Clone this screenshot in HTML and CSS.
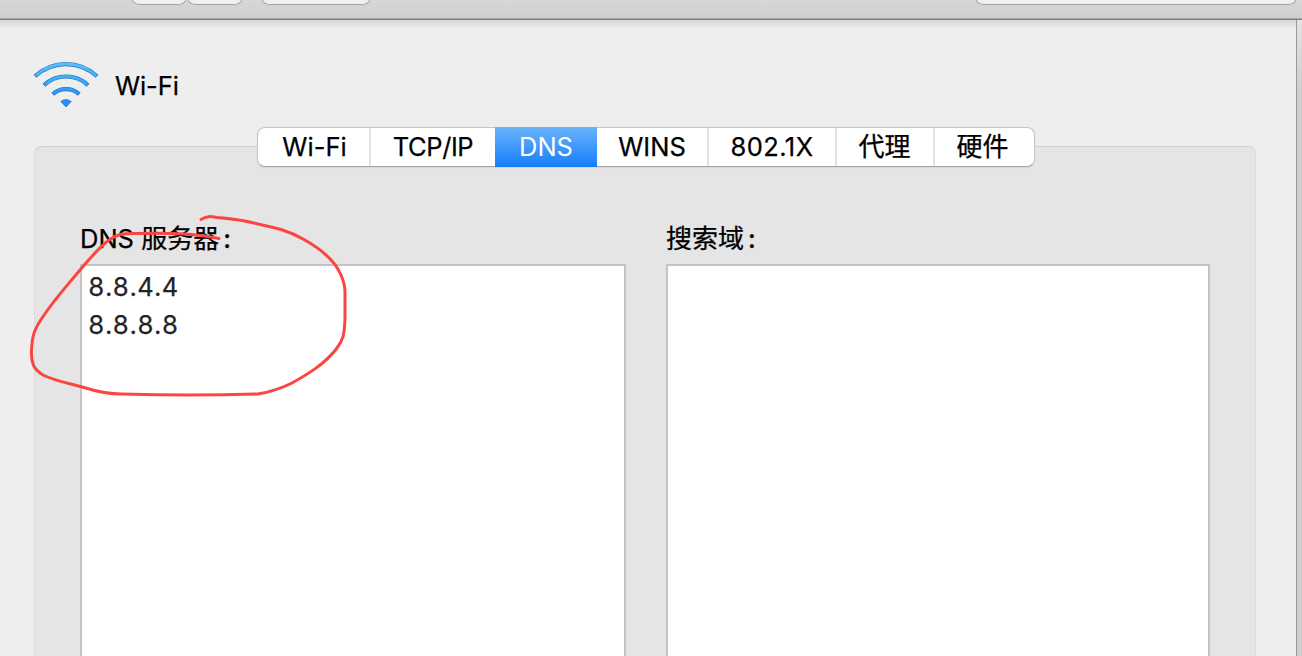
FILE: index.html
```html
<!DOCTYPE html>
<html lang="zh-CN">
<head>
<meta charset="utf-8">
<title>Wi-Fi</title>
<link rel="stylesheet" href="styles.css">
</head>
<body>
<header class="toolbar">
  <span class="tool nav"></span><span class="tool nav"></span><span class="tool all"></span><span class="tool search"></span>
</header>
<div class="window">
  <main class="sheet">
    <div class="title">
      <svg class="wifi" width="68" height="50" viewBox="0 0 68 50">
        <defs>
          <linearGradient id="blue" gradientUnits="userSpaceOnUse" x1="0" y1="2" x2="0" y2="48">
            <stop offset="0" stop-color="#5cc4fa"/><stop offset="1" stop-color="#1683fb"/>
          </linearGradient>
        </defs>
        <g fill="none" stroke="#2671ae" stroke-width="4.2">
          <path d="M3 17.200Q16.500 5.200 34 5.200T65 17.200"/>
          <path d="M12 26.200Q21 17.500 34 17.500T56 26.200"/>
          <path d="M20.800 35.200Q26 30.200 34 30.200T47.200 35.200"/>
        </g>
        <g fill="none" stroke="url(#blue)" stroke-width="3">
          <path d="M3.500 16.800Q16.500 5.100 34 5.100T64.500 16.800"/>
          <path d="M12.500 25.800Q21.500 17.400 34 17.400T55.500 25.800"/>
          <path d="M21.300 34.800Q26.500 30.100 34 30.100T46.700 34.800"/>
        </g>
        <path d="M28.800 42.500Q34 38.500 39.200 42.500L34 48Z" fill="#2390fa" stroke="#2671ae" stroke-width=".7"/>
      </svg>
      <h1 class="name">Wi-Fi</h1>
    </div>
    <nav class="tabs">
      <span class="tab t-wifi"><span class="label">Wi-Fi</span></span>
      <span class="tab t-tcp"><span class="label">TCP/IP</span></span>
      <span class="tab t-dns"><span class="label">DNS</span></span>
      <span class="tab t-wins"><span class="label">WINS</span></span>
      <span class="tab t-8021x"><span class="label">802.1X</span></span>
      <span class="tab t-proxy"><span class="label">代理</span></span>
      <span class="tab t-hw"><span class="label">硬件</span></span>
    </nav>
    <section class="panel">
      <div class="column servers">
        <h2 class="heading">DNS <span class="cjk">服务器</span><span class="colon">:</span></h2>
        <div class="list"><div class="row">8.8.4.4</div><div class="row">8.8.8.8</div></div>
      </div>
      <div class="column domains">
        <h2 class="heading"><span class="cjk">搜索域</span><span class="colon">:</span></h2>
        <div class="list"></div>
      </div>
    </section>
  </main>
  <div class="edge"></div>
</div>
<svg class="scribble" width="400" height="420" viewBox="0 0 400 420">
  <path d="M201 219.500C207 215.500 211 216.500 217 217.500C235 219 244 220 258 224C277 228 289 231 303 239C323 250 336 263 341 275C344 282 345 287 345 292V318C344.500 335 343 340 337 348C325 364 308 374 292 383C278 390 270 392 258 394C220 395 160 395 122 394C108 394 98 392 84 387.500C68 383 55 381 43 375C33 369 31 362 31.500 351C32 336 34 330 42 318C57 296 66 287 80 270C88 261 98 248 109 240C119 233 125 233.500 136 233.500C161 233 180 233 196 235C207 236 212 237 219 238.500"/>
</svg>
</body>
</html>
```
FILE: styles.css
```css
* { box-sizing: border-box; }
body {
  margin: 0;
  height: 656px;
  overflow: hidden;
  display: flex;
  flex-direction: column;
  background: #eee;
  color: #000;
  font: 25.5px/38px Inter, "Noto Sans CJK SC", sans-serif;
  -webkit-text-stroke: .25px currentColor;
}
.toolbar {
  flex: none;
  display: flex;
  height: 20px;
  padding-left: 132px;
  background: linear-gradient(#d8d6d9, #cfcdd0);
  border-bottom: 1px solid #827d84;
  box-shadow: inset 0 -1px #aba8ac;
}
.tool {
  height: 5px;
  background: #f0f0f0;
  border: solid #a4a2a5;
  border-width: 0 1px 1px;
  border-radius: 0 0 8px 8px / 0 0 5px 5px;
}
.nav { width: 54px; margin-right: 2px; }
.all { width: 108px; margin-left: 18px; }
.search { width: 320px; margin-left: 606px; }
.window { flex: 1; display: flex; min-height: 0; }
.sheet {
  width: 1296px;
  display: flex;
  flex-direction: column;
  background: linear-gradient(#d7d6d8, #e9e9e9 7px, #eee 9px);
}
.edge {
  width: 6px;
  border-left: 1px solid #999;
  background: linear-gradient(#e4e4e4, #cecece 70px);
}
.title {
  display: flex;
  height: 107px;
  padding: 39px 0 0 32px;
}
.wifi { display: block; }
.name, .heading { margin: 0; font-size: inherit; font-weight: 400; white-space: nowrap; }
.name { margin: 8px 0 0 15px; letter-spacing: -.1px; }
.tabs {
  position: relative;
  z-index: 1;
  flex: none;
  align-self: flex-start;
  display: flex;
  width: 778px;
  height: 40px;
  margin-left: 257px;
  background: #fff;
  border: 1px solid #c5c5c5;
  border-bottom-color: #a5a5a5;
  border-radius: 8px;
  box-shadow: 0 1px 1px #d5d5d5;
}
.tab {
  display: flex;
  justify-content: center;
  height: 38px;
  border-right: 2px solid #e2e2e2;
  white-space: nowrap;
}
.t-wifi { width: 113px; padding-left: 2px; }
.t-tcp { width: 124px; border: 0; letter-spacing: -.4px; }
.t-dns {
  width: 102px;
  height: 40px;
  margin-top: -1px;
  padding-top: 1px;
  border: 0;
  color: #fff;
  background: linear-gradient(#6bb3fa, #157efb);
  -webkit-text-stroke: 0;
}
.t-wins { width: 112px; }
.t-8021x { width: 128px; letter-spacing: .45px; }
.t-proxy { width: 98px; padding-right: 1px; font-size: 26px; }
.t-hw { width: 99px; padding-right: 4px; border: 0; font-size: 26px; }
.panel {
  flex: 1;
  display: flex;
  gap: 40px;
  width: 1222px;
  margin: -21px 0 0 34px;
  padding: 73px 0 0 45px;
  background: #e5e5e5;
  border: 1px solid #dadada;
  border-top-color: #d0d0d0;
  border-bottom: 0;
  border-radius: 8px 8px 0 0;
}
.column { display: flex; flex-direction: column; }
.servers { width: 546px; }
.domains { width: 544px; }
.heading { height: 44px; }
.cjk { font-size: 26px; }
.colon { margin-left: 4px; font-weight: 500; }
.list {
  flex: 1;
  padding: 2px 6px;
  background: #fff;
  border: 2px solid #c4c4c4;
  border-bottom: 0;
  color: #222;
}
.row { height: 38px; font-variant-numeric: tabular-nums; letter-spacing: .6px; }
.scribble { position: absolute; left: 0; top: 0; }
.scribble path {
  fill: none;
  stroke: #fc4440;
  stroke-width: 3;
  stroke-linecap: round;
  stroke-linejoin: round;
}
```
